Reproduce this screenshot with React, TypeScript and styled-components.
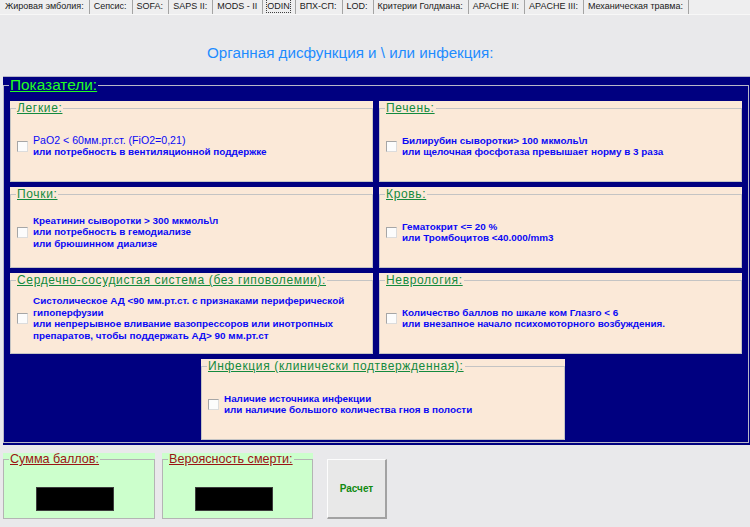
import { createGlobalStyle, styled } from 'styled-components';

const GlobalStyle = createGlobalStyle`
  html, body {
    margin: 0;
    padding: 0;
    background: #e9e9eb;
  }
  body {
    font-family: 'Liberation Sans', Arial, sans-serif;
  }
  #root {
    width: 750px;
    height: 527px;
    overflow: hidden;
  }
`;

const tabs = [
  'Жировая эмболия:',
  'Сепсис:',
  'SOFA:',
  'SAPS II:',
  'MODS - II',
  'ODIN',
  'ВПХ-СП:',
  'LOD:',
  'Критерии Голдмана:',
  'APACHE II:',
  'APACHE III:',
  'Механическая травма:',
];

type Criterion = {
  title: string;
  lead?: string;
  lines: string[];
};

const criteria: Criterion[] = [
  {
    title: 'Легкие:',
    lead: 'PaO2 < 60мм.рт.ст. (FiO2=0,21)',
    lines: ['или потребность в вентиляционной поддержке'],
  },
  {
    title: 'Печень:',
    lines: ['Билирубин сыворотки> 100 мкмоль\\л', 'или щелочная фосфотаза превышает норму в 3 раза'],
  },
  {
    title: 'Почки:',
    lines: ['Креатинин сыворотки > 300 мкмоль\\л', 'или потребность в гемодиализе', 'или брюшинном диализе'],
  },
  {
    title: 'Кровь:',
    lines: ['Гематокрит <= 20 %', 'или Тромбоцитов <40.000/mm3'],
  },
  {
    title: 'Сердечно-сосудистая система (без гиповолемии):',
    lines: [
      'Систолическое АД <90 мм.рт.ст. с признаками периферической',
      'гипоперфузии',
      'или непрерывное вливание вазопрессоров или инотропных',
      'препаратов, чтобы поддержать АД> 90 мм.рт.ст',
    ],
  },
  {
    title: 'Неврология:',
    lines: ['Количество баллов по шкале ком Глазго < 6', 'или внезапное начало психомоторного возбуждения.'],
  },
];

const infection: Criterion = {
  title: 'Инфекция (клинически подтвержденная):',
  lines: ['Наличие источника инфекции', 'или наличие большого количества гноя в полости'],
};

const App = () => {
  return (
    <Page>
      <GlobalStyle />
      <TabBar>
        {tabs.map(tab => (
          <Tab key={tab} $active={tab === 'ODIN'}>
            <span>{tab}</span>
          </Tab>
        ))}
      </TabBar>

      <Title>Органная дисфункция и \ или инфекция:</Title>

      <NavyBlock>
        <Indicators>
          <legend>Показатели:</legend>
          <PanelGrid>
            {criteria.map(item => (
              <CriterionPanel key={item.title} item={item} />
            ))}
            <CriterionPanel item={infection} centered />
          </PanelGrid>
        </Indicators>
      </NavyBlock>

      <Footer>
        <ResultBox $width={152}>
          <legend>Сумма баллов:</legend>
          <ResultValue />
        </ResultBox>
        <ResultBox $width={151}>
          <legend>Вероясность смерти:</legend>
          <ResultValue />
        </ResultBox>
        <CalcButton type="button">Расчет</CalcButton>
      </Footer>
    </Page>
  );
};

const CriterionPanel = ({ item, centered }: { item: Criterion; centered?: boolean }) => (
  <Panel $centered={centered}>
    <PanelFrame>
      <legend>{item.title}</legend>
      <Check />
      <Conditions>
        {item.lead && <Lead>{item.lead}</Lead>}
        {item.lines.map(line => (
          <div key={line}>{line}</div>
        ))}
      </Conditions>
    </PanelFrame>
  </Panel>
);

const Page = styled.div`
  width: 750px;
  height: 527px;
  background: #e9e9eb;
`;

const TabBar = styled.div`
  display: flex;
  height: 15px;
  padding-left: 1px;
  background: #eeeeef;
  border-bottom: 1px solid #f7f7f7;
  box-sizing: border-box;
`;

const Tab = styled.div<{ $active?: boolean }>`
  display: flex;
  align-items: flex-start;
  padding: 0 4px 0 3px;
  border-right: 1px solid #a4a4a4;
  font-size: 9px;
  line-height: 12px;
  color: #1a1a1a;
  white-space: nowrap;
  span {
    border: 1px ${props => (props.$active ? 'dotted #404040' : 'solid transparent')};
    border-top: none;
  }
`;

const Title = styled.div`
  padding: 30px 0 0 207px;
  height: 61px;
  box-sizing: border-box;
  font-size: 15.2px;
  line-height: 16px;
  color: #1e8cff;
`;

const NavyBlock = styled.div`
  margin-left: 3px;
  background: #000080;
  border-top: 1px solid #b4b4c8;
  padding: 0 1px 2px 0;
`;

const Indicators = styled.fieldset`
  margin: 0;
  padding: 8px 5px 2px 6px;
  border: 1px solid #b8b8c8;
  min-width: 0;
  legend {
    padding: 0 1px;
    margin-left: -1px;
    font-size: 15.4px;
    line-height: 16px;
    color: #22ff22;
    text-decoration: underline;
  }
`;

const PanelGrid = styled.div`
  display: grid;
  grid-template-columns: 363px 363px;
  grid-auto-rows: 81px;
  gap: 5px 6px;
`;

const Panel = styled.div<{ $centered?: boolean }>`
  display: flex;
  background: #fbe9d8;
  ${props =>
    props.$centered &&
    `
    grid-column: 1 / span 2;
    width: 364px;
    margin-left: 191px;
  `}
`;

const PanelFrame = styled.fieldset`
  flex: 1;
  display: flex;
  align-items: center;
  gap: 5px;
  margin: 0;
  padding: 0 6px 4px 6px;
  border: 1px solid #c4c4c4;
  min-width: 0;
  legend {
    padding: 0 1px;
    margin-left: -1px;
    font-size: 12px;
    line-height: 14px;
    letter-spacing: 0.65px;
    color: #138a3e;
    text-decoration: underline;
  }
`;

const Check = styled.span`
  flex: none;
  width: 11px;
  height: 11px;
  box-sizing: border-box;
  background: #fcfcfc;
  border: 1px solid #a6a6a6;
  border-right-color: #dcdcdc;
  border-bottom-color: #dcdcdc;
`;

const Conditions = styled.div`
  font-size: 9.9px;
  font-weight: 700;
  line-height: 11.5px;
  color: #0a0af5;
  white-space: nowrap;
`;

const Lead = styled.div`
  font-size: 10.6px;
  font-weight: 400;
  line-height: 12px;
`;

const Footer = styled.div`
  display: flex;
  align-items: flex-start;
  margin-top: 8px;
  padding-left: 3px;
`;

const ResultBox = styled.fieldset<{ $width: number }>`
  width: ${props => props.$width}px;
  height: 66px;
  box-sizing: border-box;
  margin: 0 7px 0 0;
  padding: 21px 14px 0 6px;
  display: flex;
  justify-content: center;
  align-items: flex-start;
  border: 1px solid #b4b4b4;
  background: #ccffcc;
  box-shadow: 0 -6px 0 #ccffcc;
  min-width: 0;
  legend {
    padding: 0 1px;
    margin-left: -1px;
    font-size: 12.6px;
    line-height: 13px;
    color: #9b1414;
    text-decoration: underline;
  }
`;

const ResultValue = styled.div`
  width: 78px;
  height: 24px;
  box-sizing: border-box;
  background: #000;
  border: 1px solid #3c3c3c;
`;

const CalcButton = styled.button`
  width: 60px;
  height: 60px;
  margin: 6px 0 0 7px;
  box-sizing: border-box;
  background: #e8e8e8;
  border-style: solid;
  border-width: 1px 2px 2px 1px;
  border-color: #fdfdfd #a2a2a2 #a2a2a2 #fdfdfd;
  font-family: 'Liberation Sans', Arial, sans-serif;
  font-size: 10px;
  font-weight: 700;
  color: #118a11;
  padding: 0;
`;

export default App;
